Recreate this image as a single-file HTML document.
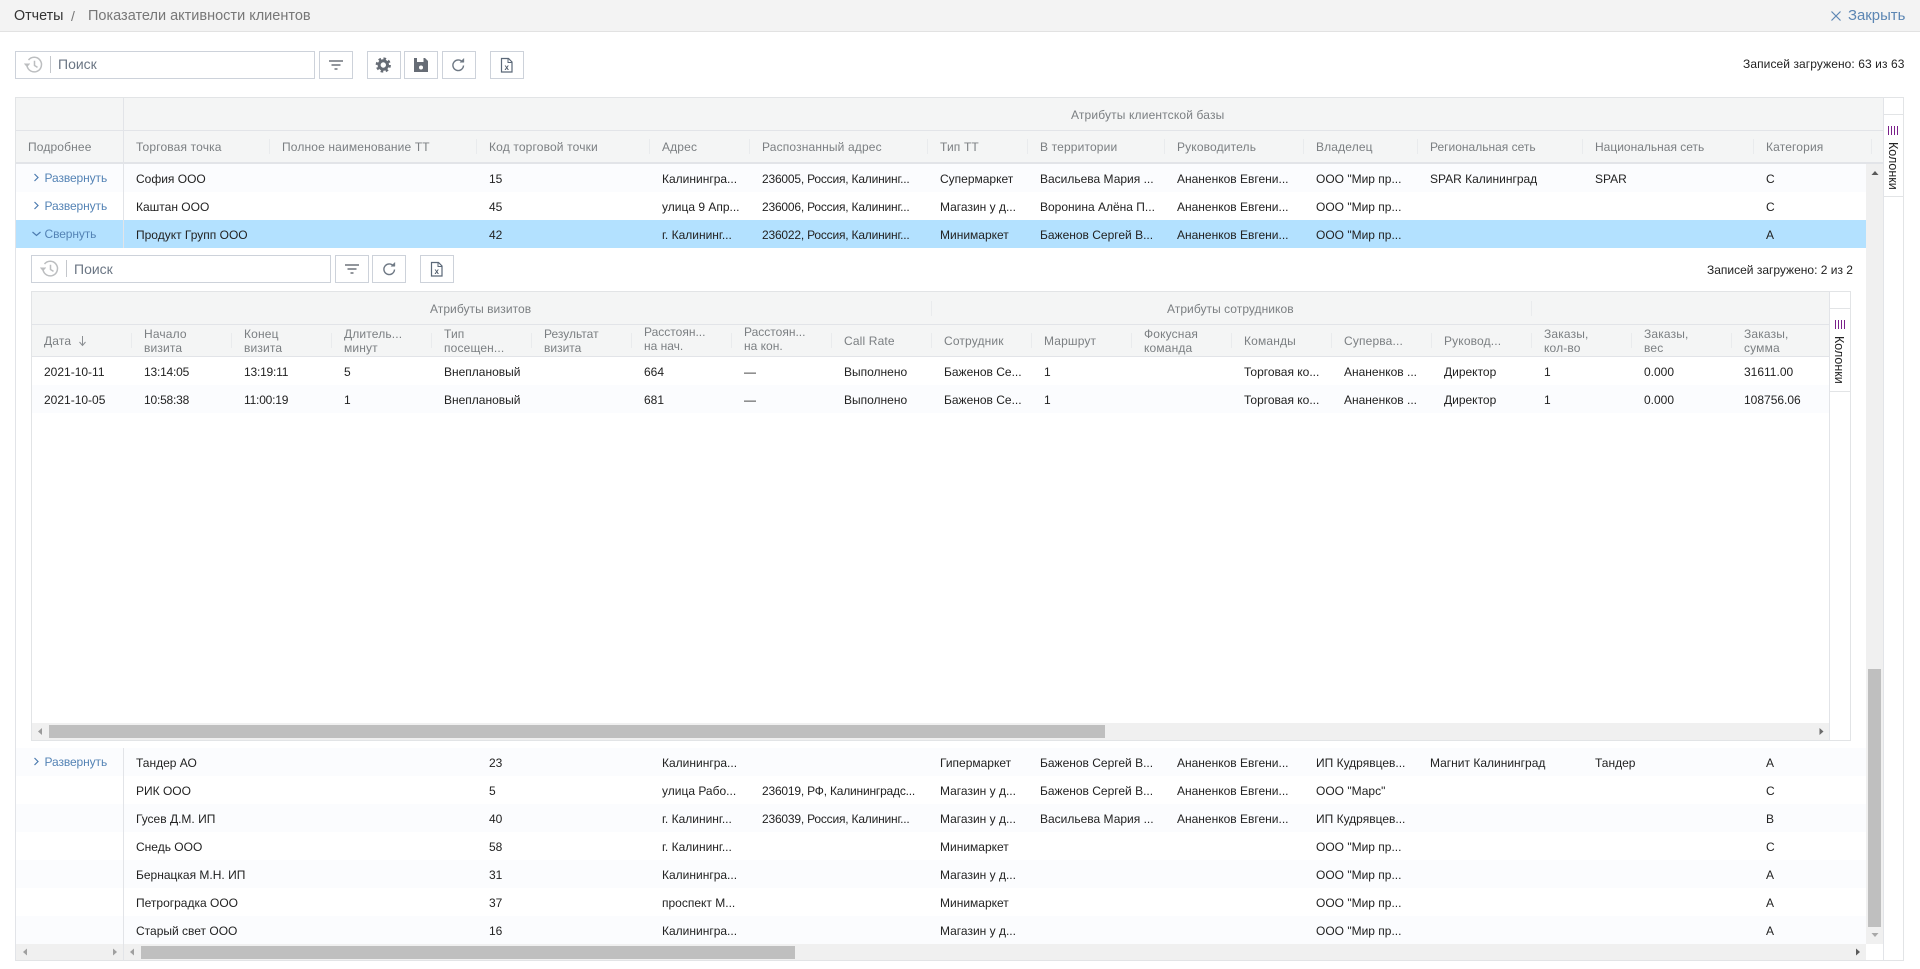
<!DOCTYPE html>
<html lang="ru"><head><meta charset="utf-8"><title>Показатели активности клиентов</title>
<style>
html,body{margin:0;padding:0;width:1920px;height:969px;overflow:hidden;background:#fff}
body{position:relative;font:12px/1.2 "Liberation Sans",sans-serif;color:#222}
div,span,svg{position:absolute;box-sizing:border-box}
.b{background:#fff;border:1px solid #cdd2da}
.t{white-space:nowrap}
.r{left:15px;width:1851px;height:28px;overflow:hidden}
.r span{top:0;line-height:30px;white-space:nowrap}
.r span.n{letter-spacing:-.2px}
.q{background:#fbfcfe}
.sel{background:#b3e1ff}
.l{color:#5483b5;line-height:28px!important;letter-spacing:-.1px}
.h{color:#7b7f82;white-space:nowrap;line-height:13.5px;letter-spacing:.15px}
.s{width:1px;height:15px;background:#e9ebed}
.g{background:#f4f5f5}
.ln{background:#e2e4e8}
.v{writing-mode:vertical-rl;white-space:nowrap;color:#222;font-size:12.5px;line-height:14px}
.p{color:#6b7684;font-size:14px;line-height:16px}
</style></head><body>

<!-- top bar -->
<div style="left:0;top:0;width:1920px;height:32px;background:#f3f3f3;border-bottom:1px solid #e2e2e2"></div>
<span class="t" style="left:14px;top:8px;font-size:14.3px;line-height:16px;color:#333">Отчеты</span>
<span class="t" style="left:71px;top:8px;font-size:14px;line-height:16px;color:#777">/</span>
<span class="t" style="left:88px;top:8px;font-size:14.5px;line-height:16px;color:#777">Показатели активности клиентов</span>
<span class="t" style="left:1848px;top:8px;font-size:14.9px;line-height:16px;color:#5c86b3">Закрыть</span>
<span class="t" style="left:1743px;top:57px;font-size:12px;line-height:14px;color:#222;letter-spacing:.08px">Записей загружено: 63 из 63</span>

<!-- toolbar -->
<div class="b" style="left:15px;top:51px;width:300px;height:28px"></div>
<div class="b" style="left:319px;top:51px;width:34px;height:28px"></div>
<div class="b" style="left:367px;top:51px;width:34px;height:28px"></div>
<div class="b" style="left:404px;top:51px;width:34px;height:28px"></div>
<div class="b" style="left:442px;top:51px;width:34px;height:28px"></div>
<div class="b" style="left:490px;top:51px;width:34px;height:28px"></div>
<div style="left:50px;top:56px;width:1px;height:17px;background:#c4c7cc"></div>
<span class="p t" style="left:58px;top:56px">Поиск</span>

<!-- main grid frame -->
<div style="left:15px;top:97px;width:1889px;height:864px;border:1px solid #e2e4e6;border-left:1px solid #e2e4e6"></div>
<div class="g" style="left:16px;top:98px;width:1867px;height:65px"></div>
<div class="ln" style="left:16px;top:130px;width:1867px;height:1px"></div>
<div class="ln" style="left:16px;top:162px;width:1867px;height:2px"></div>
<div class="ln" style="left:1883px;top:97px;width:1px;height:864px"></div>
<div class="ln" style="left:123px;top:98px;width:1px;height:65px"></div>

<span class="h" style="left:1071px;top:109px">Атрибуты клиентской базы</span>
<span class="h" style="left:28px;top:141px">Подробнее</span>
<span class="h" style="left:136px;top:141px">Торговая точка</span>
<span class="h" style="left:282px;top:141px">Полное наименование ТТ</span>
<span class="h" style="left:489px;top:141px">Код торговой точки</span>
<span class="h" style="left:662px;top:141px">Адрес</span>
<span class="h" style="left:762px;top:141px">Распознанный адрес</span>
<span class="h" style="left:940px;top:141px">Тип ТТ</span>
<span class="h" style="left:1040px;top:141px">В территории</span>
<span class="h" style="left:1177px;top:141px">Руководитель</span>
<span class="h" style="left:1316px;top:141px">Владелец</span>
<span class="h" style="left:1430px;top:141px;letter-spacing:0">Региональная сеть</span>
<span class="h" style="left:1595px;top:141px;letter-spacing:0">Национальная сеть</span>
<span class="h" style="left:1766px;top:141px">Категория</span>
<div class="s" style="left:269px;top:139px"></div><div class="s" style="left:476px;top:139px"></div><div class="s" style="left:649px;top:139px"></div><div class="s" style="left:749px;top:139px"></div><div class="s" style="left:927px;top:139px"></div><div class="s" style="left:1027px;top:139px"></div><div class="s" style="left:1164px;top:139px"></div><div class="s" style="left:1303px;top:139px"></div><div class="s" style="left:1417px;top:139px"></div><div class="s" style="left:1582px;top:139px"></div><div class="s" style="left:1753px;top:139px"></div><div class="s" style="left:1871px;top:139px"></div>

<!-- side button main -->
<div style="left:1884px;top:114px;width:20px;height:83px;border-top:1px solid #e2e4e6;border-bottom:1px solid #e2e4e6"></div>
<span class="v" style="left:1886px;top:142px">Колонки</span>

<!-- rows top -->
<div class="r q" style="top:164px"><span class="l" style="left:29.5px">Развернуть</span><span style="left:121px">София ООО</span><span style="left:474px">15</span><span style="left:647px">Калинингра...</span><span class="n" style="left:747px">236005, Россия, Калининг...</span><span style="left:925px">Супермаркет</span><span style="left:1025px">Васильева Мария ...</span><span style="left:1162px">Ананенков Евгени...</span><span style="left:1301px">ООО "Мир пр...</span><span style="left:1415px">SPAR Калининград</span><span style="left:1580px">SPAR</span><span style="left:1751px">C</span></div>
<div class="r" style="top:192px"><span class="l" style="left:29.5px">Развернуть</span><span style="left:121px">Каштан ООО</span><span style="left:474px">45</span><span style="left:647px">улица 9 Апр...</span><span class="n" style="left:747px">236006, Россия, Калининг...</span><span style="left:925px">Магазин у д...</span><span style="left:1025px">Воронина Алёна П...</span><span style="left:1162px">Ананенков Евгени...</span><span style="left:1301px">ООО "Мир пр...</span><span style="left:1751px">C</span></div>
<div class="r sel" style="top:220px"><span class="l" style="left:29.5px">Свернуть</span><span style="left:121px">Продукт Групп ООО</span><span style="left:474px">42</span><span style="left:647px">г. Калининг...</span><span class="n" style="left:747px">236022, Россия, Калининг...</span><span style="left:925px">Минимаркет</span><span style="left:1025px">Баженов Сергей В...</span><span style="left:1162px">Ананенков Евгени...</span><span style="left:1301px">ООО "Мир пр...</span><span style="left:1751px">A</span></div>
<div class="ln" style="left:123px;top:164px;width:1px;height:84px"></div>

<!-- child toolbar -->
<div class="b" style="left:31px;top:255px;width:300px;height:28px"></div>
<div class="b" style="left:335px;top:255px;width:34px;height:28px"></div>
<div class="b" style="left:372px;top:255px;width:34px;height:28px"></div>
<div class="b" style="left:420px;top:255px;width:34px;height:28px"></div>
<div style="left:66px;top:260px;width:1px;height:17px;background:#c4c7cc"></div>
<span class="p t" style="left:74px;top:261px">Поиск</span>
<span class="t" style="left:1707px;top:263px;line-height:14px">Записей загружено: 2 из 2</span>

<!-- child grid -->
<div style="left:31px;top:291px;width:1820px;height:450px;border:1px solid #e2e4e6"></div>
<div class="g" style="left:32px;top:292px;width:1797px;height:65px"></div>
<div class="ln" style="left:32px;top:324px;width:1797px;height:1px"></div>
<div class="ln" style="left:32px;top:356px;width:1797px;height:1px"></div>
<div class="ln" style="left:1829px;top:291px;width:1px;height:450px"></div>
<div style="left:1830px;top:308px;width:21px;height:84px;border-top:1px solid #e2e4e6;border-bottom:1px solid #e2e4e6"></div>
<span class="v" style="left:1832px;top:336px">Колонки</span>

<span class="h" style="left:430px;top:303px;letter-spacing:.05px">Атрибуты визитов</span>
<span class="h" style="left:1167px;top:303px;letter-spacing:.05px">Атрибуты сотрудников</span>
<div class="s" style="left:931px;top:301px"></div><div class="s" style="left:1531px;top:301px"></div>

<span class="h" style="left:44px;top:335px">Дата</span>
<span class="h" style="left:144px;top:328px">Начало<br>визита</span>
<span class="h" style="left:244px;top:328px">Конец<br>визита</span>
<span class="h" style="left:344px;top:328px">Длитель...<br>минут</span>
<span class="h" style="left:444px;top:328px">Тип<br>посещен...</span>
<span class="h" style="left:544px;top:328px;letter-spacing:0">Результат<br>визита</span>
<span class="h" style="left:644px;top:326px;letter-spacing:0">Расстоян...<br>на нач.</span>
<span class="h" style="left:744px;top:326px;letter-spacing:0">Расстоян...<br>на кон.</span>
<span class="h" style="left:844px;top:335px">Call Rate</span>
<span class="h" style="left:944px;top:335px">Сотрудник</span>
<span class="h" style="left:1044px;top:335px">Маршрут</span>
<span class="h" style="left:1144px;top:328px">Фокусная<br>команда</span>
<span class="h" style="left:1244px;top:335px">Команды</span>
<span class="h" style="left:1344px;top:335px">Суперва...</span>
<span class="h" style="left:1444px;top:335px">Руковод...</span>
<span class="h" style="left:1544px;top:328px">Заказы,<br>кол-во</span>
<span class="h" style="left:1644px;top:328px">Заказы,<br>вес</span>
<span class="h" style="left:1744px;top:328px">Заказы,<br>сумма</span>
<div class="s" style="left:131px;top:333px"></div><div class="s" style="left:231px;top:333px"></div><div class="s" style="left:331px;top:333px"></div><div class="s" style="left:431px;top:333px"></div><div class="s" style="left:531px;top:333px"></div><div class="s" style="left:631px;top:333px"></div><div class="s" style="left:731px;top:333px"></div><div class="s" style="left:831px;top:333px"></div><div class="s" style="left:931px;top:333px"></div><div class="s" style="left:1031px;top:333px"></div><div class="s" style="left:1131px;top:333px"></div><div class="s" style="left:1231px;top:333px"></div><div class="s" style="left:1331px;top:333px"></div><div class="s" style="left:1431px;top:333px"></div><div class="s" style="left:1531px;top:333px"></div><div class="s" style="left:1631px;top:333px"></div><div class="s" style="left:1731px;top:333px"></div>

<div class="r" style="left:32px;top:357px;width:1797px"><span style="left:12px">2021-10-11</span><span class="n" style="left:112px">13:14:05</span><span class="n" style="left:212px">13:19:11</span><span style="left:312px">5</span><span style="left:412px">Внеплановый</span><span style="left:612px">664</span><span style="left:712px">—</span><span style="left:812px">Выполнено</span><span style="left:912px">Баженов Се...</span><span style="left:1012px">1</span><span style="left:1212px">Торговая ко...</span><span style="left:1312px">Ананенков ...</span><span style="left:1412px">Директор</span><span style="left:1512px">1</span><span style="left:1612px">0.000</span><span style="left:1712px">31611.00</span></div>
<div class="r q" style="left:32px;top:385px;width:1797px"><span style="left:12px">2021-10-05</span><span class="n" style="left:112px">10:58:38</span><span class="n" style="left:212px">11:00:19</span><span style="left:312px">1</span><span style="left:412px">Внеплановый</span><span style="left:612px">681</span><span style="left:712px">—</span><span style="left:812px">Выполнено</span><span style="left:912px">Баженов Се...</span><span style="left:1012px">1</span><span style="left:1212px">Торговая ко...</span><span style="left:1312px">Ананенков ...</span><span style="left:1412px">Директор</span><span style="left:1512px">1</span><span style="left:1612px">0.000</span><span style="left:1712px">108756.06</span></div>

<!-- child hscroll -->
<div style="left:32px;top:723px;width:1797px;height:17px;background:#f0f0f0"></div>
<div style="left:49px;top:725px;width:1056px;height:13px;background:#bfbfbf"></div>

<!-- rows bottom -->
<div class="r q" style="top:748px"><span class="l" style="left:29.5px">Развернуть</span><span style="left:121px">Тандер АО</span><span style="left:474px">23</span><span style="left:647px">Калинингра...</span><span style="left:925px">Гипермаркет</span><span style="left:1025px">Баженов Сергей В...</span><span style="left:1162px">Ананенков Евгени...</span><span style="left:1301px">ИП Кудрявцев...</span><span style="left:1415px">Магнит Калининград</span><span style="left:1580px">Тандер</span><span style="left:1751px">A</span></div>
<div class="r" style="top:776px"><span style="left:121px">РИК ООО</span><span style="left:474px">5</span><span style="left:647px">улица Рабо...</span><span class="n" style="left:747px">236019, РФ, Калининградс...</span><span style="left:925px">Магазин у д...</span><span style="left:1025px">Баженов Сергей В...</span><span style="left:1162px">Ананенков Евгени...</span><span style="left:1301px">ООО "Марс"</span><span style="left:1751px">C</span></div>
<div class="r q" style="top:804px"><span style="left:121px">Гусев Д.М. ИП</span><span style="left:474px">40</span><span style="left:647px">г. Калининг...</span><span class="n" style="left:747px">236039, Россия, Калининг...</span><span style="left:925px">Магазин у д...</span><span style="left:1025px">Васильева Мария ...</span><span style="left:1162px">Ананенков Евгени...</span><span style="left:1301px">ИП Кудрявцев...</span><span style="left:1751px">B</span></div>
<div class="r" style="top:832px"><span style="left:121px">Снедь ООО</span><span style="left:474px">58</span><span style="left:647px">г. Калининг...</span><span style="left:925px">Минимаркет</span><span style="left:1301px">ООО "Мир пр...</span><span style="left:1751px">C</span></div>
<div class="r q" style="top:860px"><span style="left:121px">Бернацкая М.Н. ИП</span><span style="left:474px">31</span><span style="left:647px">Калинингра...</span><span style="left:925px">Магазин у д...</span><span style="left:1301px">ООО "Мир пр...</span><span style="left:1751px">A</span></div>
<div class="r" style="top:888px"><span style="left:121px">Петроградка ООО</span><span style="left:474px">37</span><span style="left:647px">проспект М...</span><span style="left:925px">Минимаркет</span><span style="left:1301px">ООО "Мир пр...</span><span style="left:1751px">A</span></div>
<div class="r q" style="top:916px"><span style="left:121px">Старый свет ООО</span><span style="left:474px">16</span><span style="left:647px">Калинингра...</span><span style="left:925px">Магазин у д...</span><span style="left:1301px">ООО "Мир пр...</span><span style="left:1751px">A</span></div>
<div class="ln" style="left:123px;top:748px;width:1px;height:213px"></div>
<div class="ln" style="left:15px;top:164px;width:1px;height:797px"></div>

<!-- main scrollbars -->
<div style="left:1866px;top:164px;width:17px;height:780px;background:#f0f0f0"></div>
<div style="left:1868px;top:669px;width:13px;height:258px;background:#bfbfbf"></div>
<div style="left:16px;top:944px;width:107px;height:16px;background:#f0f0f0"></div>
<div style="left:124px;top:944px;width:1742px;height:16px;background:#f0f0f0"></div>
<div style="left:141px;top:946px;width:654px;height:13px;background:#bfbfbf"></div>

<!-- icons -->
<svg width="1920" height="969" viewBox="0 0 1920 969" style="left:0;top:0" fill="none">
<defs>
<g id="cl" stroke="#bcbec0" stroke-width="1.5"><path d="M28.5 60a7.300 7.300 0 1 1-1.500 5.800"/><path d="M34.500 60.800v4.700l3 1.900"/><path d="M24.500 63.500l2.500 3 2.600-3" fill="#bcbec0" stroke-width="1"/></g>
<g id="fl" stroke="#6f747b" stroke-width="1.5"><path d="M329 61h14M331.500 65h9M334.500 69h3"/></g>
<g id="rf" stroke="#6e7884" stroke-width="1.400"><path d="M462.200 61.800a5.300 5.300 0 1 0 1.300 3.700"/><path d="M460 62.300h3.900v-3.900z" fill="#6e7884" stroke-width=".5"/></g>
<g id="xl"><path d="M501.500 58.500h7l3.500 3.500v10h-10.500z" stroke="#5b6878" stroke-width="1.200"/><path d="M508 58.500v4h4" stroke="#5b6878" stroke-width="1"/><text x="506.700" y="70" font-family="Liberation Sans" font-size="8" font-weight="bold" fill="#4f5b6a" text-anchor="middle">x</text></g>
</defs>
<use href="#cl"/><use href="#fl"/><use href="#rf"/><use href="#xl"/>
<use href="#cl" x="16" y="204"/><use href="#fl" x="16" y="204"/><use href="#rf" x="-69" y="204"/><use href="#xl" x="-70" y="204"/>
<!-- gear -->
<g stroke="#666c75"><circle cx="383.300" cy="65" r="4.200" stroke-width="3"/><circle cx="383.300" cy="65" r="6.500" stroke-width="2.200" stroke-dasharray="2.600 2.500"/></g>
<!-- save -->
<path d="M414 58h11l3 3v11h-14z" fill="#666c75"/><rect x="417" y="58" width="6.500" height="4" fill="#fff"/><circle cx="421" cy="67.500" r="2" fill="#fff"/>
<!-- close -->
<path d="M1831.500 11.500l9 9M1840.500 11.500l-9 9" stroke="#5c86b3" stroke-width="1.200"/>
<!-- chevrons -->
<path d="M34.500 174l3.500 3.500-3.500 3.500M34.500 202l3.500 3.500-3.500 3.500M34.500 758l3.500 3.500-3.500 3.500" stroke="#4d7cb0" stroke-width="1.200"/>
<path d="M32.500 232l4 3.500 4-3.500" stroke="#4d7cb0" stroke-width="1.200"/>
<!-- sort arrow -->
<path d="M82.500 336v9M79.500 342l3 3.500 3-3.500" stroke="#8a8e92" stroke-width="1"/>
<!-- side icons -->
<path d="M1888.500 126v9M1891.500 126v9M1894.500 126v9M1897.500 126v9M1835.500 320v9M1838.500 320v9M1841.500 320v9M1844.500 320v9" stroke="#7a1f8a" stroke-width="1"/>
<!-- scroll arrows -->
<path d="M1871.500 175l3.500-4 3.500 4z" fill="#5a5a5a"/><path d="M1871.500 933l3.500 4 3.500-4z" fill="#a8a8a8"/>
<path d="M42 728l-4 3.500 4 3.500z" fill="#9a9a9a"/><path d="M1819.500 728l4 3.500-4 3.500z" fill="#6a6a6a"/>
<path d="M27 948.500l-4 3.500 4 3.500z" fill="#a0a0a0"/><path d="M113 948.500l4 3.500-4 3.500z" fill="#a0a0a0"/>
<path d="M134 948.500l-4 3.500 4 3.500z" fill="#a0a0a0"/><path d="M1856 948.500l4 3.500-4 3.500z" fill="#5a5a5a"/>
</svg>
</body></html>
